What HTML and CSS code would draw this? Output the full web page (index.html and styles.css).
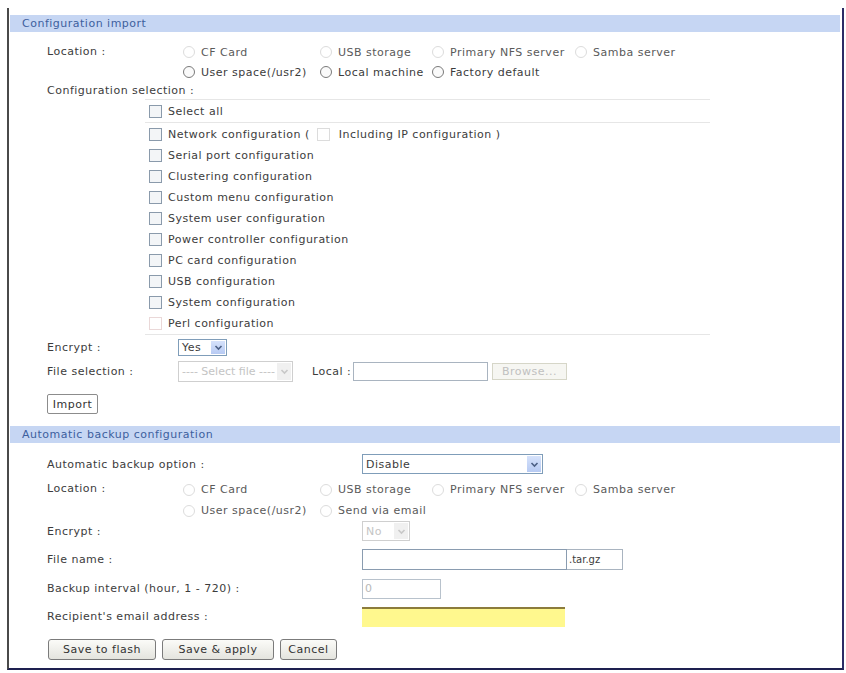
FILE: index.html
```html
<!DOCTYPE html>
<html lang="en">
<head>
    <meta charset="UTF-8">
    <title>Configuration import</title>
    <link rel="stylesheet" href="styles.css">
</head>
<body>
    <div class="panel">
        <div class="bar">Configuration import</div>
        <div class="form">
            <div class="row loc-row">
                <div class="label loc-label">Location :</div>
                <div class="radios">
                    <label class="opt off"><input type="radio" name="imp" disabled>CF Card</label>
                    <label class="opt off"><input type="radio" name="imp" disabled>USB storage</label>
                    <label class="opt off"><input type="radio" name="imp" disabled>Primary NFS server</label>
                    <label class="opt off"><input type="radio" name="imp" disabled>Samba server</label>
                    <label class="opt"><input type="radio" name="imp">User space(/usr2)</label>
                    <label class="opt"><input type="radio" name="imp">Local machine</label>
                    <label class="opt"><input type="radio" name="imp">Factory default</label>
                </div>
            </div>
            <div class="row sel-label">
                <div class="label">Configuration selection :</div>
            </div>
            <div class="checklist">
                <label class="check first"><input type="checkbox">Select all</label>
                <div class="items">
                    <label class="check"><input type="checkbox">Network configuration (<input type="checkbox" class="inner" disabled><span class="inner-text">Including IP configuration )</span></label>
                    <label class="check"><input type="checkbox">Serial port configuration</label>
                    <label class="check"><input type="checkbox">Clustering configuration</label>
                    <label class="check"><input type="checkbox">Custom menu configuration</label>
                    <label class="check"><input type="checkbox">System user configuration</label>
                    <label class="check"><input type="checkbox">Power controller configuration</label>
                    <label class="check"><input type="checkbox">PC card configuration</label>
                    <label class="check"><input type="checkbox">USB configuration</label>
                    <label class="check"><input type="checkbox">System configuration</label>
                    <label class="check"><input type="checkbox" class="faint" disabled>Perl configuration</label>
                </div>
            </div>
            <div class="row encrypt-row">
                <div class="label short">Encrypt :</div>
                <div class="select yes">
                    <span class="value">Yes</span>
                    <span class="arrow"><svg width="9" height="7" viewBox="0 0 9 7"><path d="M1.5 2 L4.5 5 L7.5 2" fill="none" stroke="#4d6185" stroke-width="1.6"/></svg></span>
                </div>
            </div>
            <div class="row file-row">
                <div class="label short">File selection :</div>
                <div class="select file disabled">
                    <span class="value">---- Select file ----</span>
                    <span class="arrow"><svg width="9" height="7" viewBox="0 0 9 7"><path d="M1.5 2 L4.5 5 L7.5 2" fill="none" stroke="#c8c8c8" stroke-width="1.6"/></svg></span>
                </div>
                <span class="local">Local :</span>
                <input type="text" class="text local-input">
                <button class="btn browse" disabled>Browse...</button>
            </div>
            <div class="row import-row">
                <button class="btn plain">Import</button>
            </div>
        </div>

        <div class="bar">Automatic backup configuration</div>
        <div class="form">
            <div class="row option-row">
                <div class="label wide">Automatic backup option :</div>
                <div class="select disable">
                    <span class="value">Disable</span>
                    <span class="arrow"><svg width="9" height="7" viewBox="0 0 9 7"><path d="M1.5 2 L4.5 5 L7.5 2" fill="none" stroke="#4d6185" stroke-width="1.6"/></svg></span>
                </div>
            </div>
            <div class="row loc-row">
                <div class="label loc-label">Location :</div>
                <div class="radios tall">
                    <label class="opt"><input type="radio" name="bak" disabled>CF Card</label>
                    <label class="opt"><input type="radio" name="bak" disabled>USB storage</label>
                    <label class="opt"><input type="radio" name="bak" disabled>Primary NFS server</label>
                    <label class="opt"><input type="radio" name="bak" disabled>Samba server</label>
                    <label class="opt"><input type="radio" name="bak" disabled>User space(/usr2)</label>
                    <label class="opt"><input type="radio" name="bak" disabled>Send via email</label>
                </div>
            </div>
            <div class="row bk-encrypt">
                <div class="label wide">Encrypt :</div>
                <div class="select no disabled">
                    <span class="value">No</span>
                    <span class="arrow"><svg width="9" height="7" viewBox="0 0 9 7"><path d="M1.5 2 L4.5 5 L7.5 2" fill="none" stroke="#c8c8c8" stroke-width="1.6"/></svg></span>
                </div>
            </div>
            <div class="row field-row">
                <div class="label wide">File name :</div>
                <input type="text" class="text name-input">
                <span class="suffix">.tar.gz</span>
            </div>
            <div class="row field-row">
                <div class="label wide">Backup interval (hour, 1 - 720) :</div>
                <input type="text" class="text interval-input" value="0" disabled>
            </div>
            <div class="row field-row">
                <div class="label wide">Recipient's email address :</div>
                <input type="text" class="text email-input">
            </div>
            <div class="row buttons">
                <button class="btn">Save to flash</button>
                <button class="btn">Save &amp; apply</button>
                <button class="btn">Cancel</button>
            </div>
        </div>
    </div>
</body>
</html>
```

FILE: styles.css
```css
body {
    margin: 0;
    background: #fff;
    font-family: "DejaVu Sans", Verdana, sans-serif;
    font-size: 11px;
    letter-spacing: 0.5px;
    color: #3c3c3c;
}
.panel {
    margin: 8px 0 0 7px;
    width: 830px;
    padding: 7px 2px 0 1px;
    border-left: 2px solid #4a4a4a;
    border-right: 2px solid #2c2c66;
    border-bottom: 2px solid #1e2050;
    height: 653px;
}
.bar {
    height: 17px;
    line-height: 17px;
    background: #c6d6f3;
    color: #3d5f9e;
    padding-left: 12px;
}
.form {
    padding-left: 37px;
}
.row {
    display: flex;
    align-items: center;
}
.label {
    flex: none;
}
.loc-row {
    margin-top: 10px;
    align-items: flex-start;
}
.loc-label {
    width: 136px;
    height: 20px;
    line-height: 20px;
}
.radios {
    display: grid;
    grid-template-columns: 137px 112px 143px auto;
    grid-auto-rows: 20px;
}
.radios.tall {
    grid-auto-rows: 21px;
}
.opt {
    display: flex;
    align-items: center;
    white-space: nowrap;
}
.opt.off, .radios.tall .opt {
    color: #5a5a5a;
}
input[type=radio] {
    appearance: none;
    width: 12px;
    height: 12px;
    margin: 0 6px 0 0;
    border: 1px solid #7a7a7a;
    border-radius: 50%;
    background: #fafafa;
}
input[type=radio]:disabled {
    border-color: #dcdcdc;
    background: #fff;
}
.sel-label {
    height: 17px;
}
.checklist {
    margin-left: 98px;
    width: 565px;
    border-top: 1px solid #e6e6e6;
    border-bottom: 1px solid #e6e6e6;
}
.check {
    display: flex;
    align-items: center;
    height: 21px;
    padding-left: 4px;
    white-space: nowrap;
}
.check.first {
    height: 22px;
    border-bottom: 1px solid #e6e6e6;
}
.items {
    padding-top: 1px;
}
input[type=checkbox] {
    appearance: none;
    width: 13px;
    height: 13px;
    margin: 0 6px 0 0;
    border: 1px solid #8a9aab;
    background: #f3f5f7;
}
input[type=checkbox].inner {
    margin-left: 7px;
    border-color: #dcdcdc;
    background: #fff;
}
input[type=checkbox].faint {
    border-color: #ead8d8;
    background: #fff;
}
.inner-text {
    margin-left: 3px;
}
.encrypt-row {
    margin-top: 2px;
    height: 20px;
}
.short {
    width: 131px;
}
.select {
    display: flex;
    align-items: stretch;
    border: 1px solid #7f9db9;
    background: #fff;
    box-sizing: border-box;
}
.select .value {
    flex: 1;
    padding-left: 3px;
    display: flex;
    align-items: center;
}
.select .arrow {
    width: 14px;
    margin: 1px;
    background: linear-gradient(#d6e2fb, #b7caf3);
    display: flex;
    align-items: center;
    justify-content: center;
}
.select.disabled {
    border-color: #cfcfcf;
    color: #c4c4c4;
}
.select.disabled .arrow {
    background: #f0f0f0;
}
.select.yes {
    width: 49px;
    height: 17px;
}
.file-row {
    margin-top: 3px;
    height: 22px;
}
.select.file {
    width: 115px;
    height: 21px;
    letter-spacing: 0;
}
.local {
    margin-left: 19px;
    width: 41px;
}
.text {
    box-sizing: border-box;
    border: 1px solid #a9b4c0;
    background: #fff;
    font: inherit;
    letter-spacing: inherit;
    padding: 0 2px;
    margin: 0;
}
.local-input {
    width: 135px;
    height: 19px;
}
.btn {
    font: inherit;
    letter-spacing: inherit;
    color: #333;
    height: 21px;
    border: 1px solid #7b7b7b;
    border-radius: 3px;
    background: linear-gradient(#fbfbf8, #e4e4de);
    padding: 0;
    box-sizing: border-box;
}
.btn.browse {
    margin-left: 4px;
    width: 75px;
    height: 17px;
    border: 1px solid #d6d6c8;
    border-radius: 0;
    color: #c0c0c0;
    background: #f6f6f2;
}
.import-row {
    margin-top: 12px;
}
.btn.plain {
    width: 51px;
    height: 20px;
    border-radius: 2px;
    background: #fff;
    border-color: #8c8c8c;
}
.form + .bar {
    margin-top: 12px;
}
.wide {
    width: 315px;
}
.option-row {
    margin-top: 11px;
    height: 20px;
}
.select.disable {
    width: 181px;
    height: 20px;
}
.option-row + .loc-row {
    margin-top: 5px;
}
.bk-encrypt {
    margin-top: 0;
    height: 20px;
}
.select.no {
    width: 48px;
    height: 20px;
}
.field-row {
    margin-top: 8px;
    height: 21px;
}
.field-row + .field-row {
    margin-top: 8px;
}
.field-row + .field-row + .field-row {
    margin-top: 7px;
}
.name-input {
    width: 205px;
    height: 21px;
    border-color: #8a9cb0;
}
.suffix {
    box-sizing: border-box;
    width: 56px;
    height: 21px;
    line-height: 19px;
    border: 1px solid #a9b4c0;
    border-left: none;
    padding-left: 2px;
    font-size: 10px;
    letter-spacing: 0;
}
.interval-input {
    width: 79px;
    height: 20px;
    color: #b8b8b8;
    border-color: #b8c2cc;
}
.email-input {
    width: 203px;
    height: 20px;
    background: #fff88e;
    border: none;
    border-top: 2px solid #8c7c3c;
}
.buttons {
    margin-top: 12px;
    margin-left: 1px;
    gap: 6px;
}
.buttons .btn:nth-child(1) {
    width: 108px;
}
.buttons .btn:nth-child(2) {
    width: 112px;
}
.buttons .btn:nth-child(3) {
    width: 57px;
}
```
